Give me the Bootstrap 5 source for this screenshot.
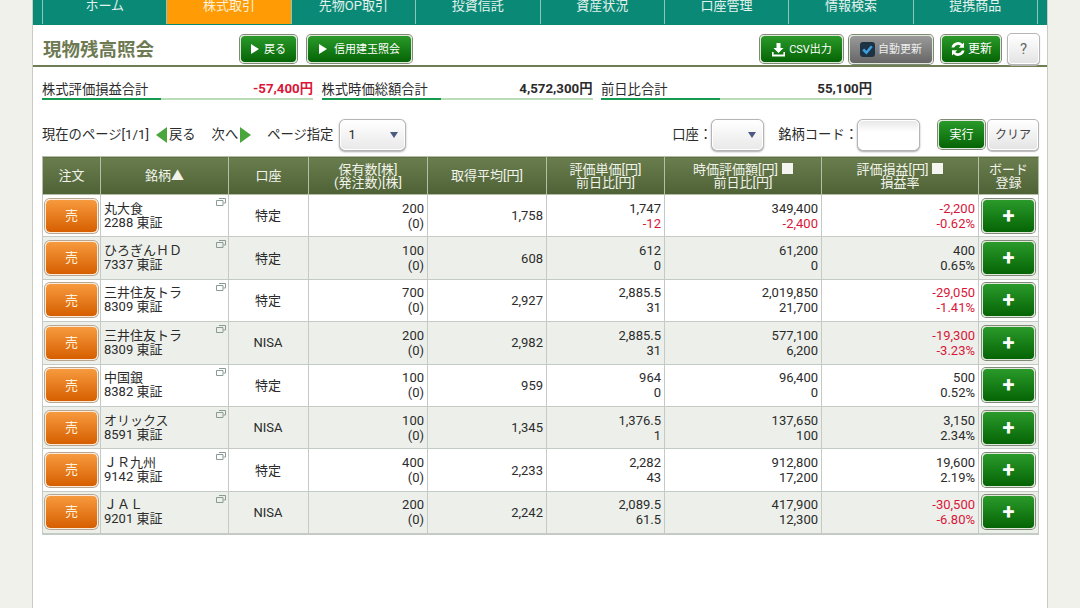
<!DOCTYPE html>
<html lang="ja">
<head>
  <meta charset="UTF-8">
  <meta name="viewport" content="width=device-width, initial-scale=1.0">
  <title>現物残高照会</title>
  <link href="https://cdn.jsdelivr.net/npm/bootstrap@5.3.0/dist/css/bootstrap.min.css" rel="stylesheet">
  <script src="https://cdn.jsdelivr.net/npm/bootstrap@5.3.0/dist/js/bootstrap.bundle.min.js"></script>
  <style>
    html, body { height: 608px; overflow: hidden; }
    body { background: #f1f1ec; font-family: "Roboto", "Noto Sans CJK JP", sans-serif; font-size: 13px; color: #2b2b2b; }
    .sheet { width: 1016px; height: 608px; margin-left: 32px; background: #fff; border-left: 1px solid #c9cbc4; border-right: 1px solid #c9cbc4; }
    .topnav { height: 25px; padding: 0 9px 0 9px; background: #0a8a76; overflow: hidden; border-bottom: 1px solid #0a8a76; }
    .topnav a { flex: 1 1 0; height: 25px; line-height: 12px; text-align: center; color: #e4f2ee; font-size: 13px; text-decoration: none; border-left: 1px solid #8cc6ba; }
    .topnav a:last-child { border-right: 1px solid #8cc6ba; }
    .topnav a.on { background: #ff9b05; color: #fff0d8; }
    .titlebar { height: 42px; padding: 8px 8px 0 10px; border-bottom: 2px solid #6f7d52; }
    .titlebar h1 { font-size: 18.5px; font-weight: 700; color: #6d7a52; margin: 3px 0 0; width: 197px; }
    .gbtn, .wbtn { display: inline-flex; align-items: center; justify-content: center; padding: 0; font-size: 11px; border-radius: 4px; line-height: 1; }
    .gbtn { color: #fff; background: linear-gradient(#2a9a2a, #056405); background-clip: padding-box; border: 1px solid #e2e7dc; box-shadow: 0 0 0 1px #7d8a75; }
    .gbtn:hover, .wbtn:hover { color: inherit; }
    .wbtn { color: #444; background: linear-gradient(#fff, #e4e4e4); border: 1px solid #fff; box-shadow: 0 0 0 1px #b5b5b5, 0 1px 1px 1px #bbb; }
    .b-back { width: 57px; height: 28px; gap: 5px; }
    .b-margin { width: 105px; height: 28px; gap: 7px; margin-left: 10px; }
    .b-csv { width: 83px; height: 28px; gap: 3px; }
    .b-auto { width: 84px; height: 29px; gap: 3px; margin-left: 6px; color: #eee; background: linear-gradient(#9a9a9a, #666); background-clip: padding-box; }
    .b-renew { width: 60px; height: 28px; gap: 2px; margin-left: 8px; font-size: 12px; }
    .b-help { width: 31px; height: 30px; margin-left: 7px; font-size: 15px; color: #666; }
    .tri { width: 0; height: 0; border-left: 8px solid #fff; border-top: 5px solid transparent; border-bottom: 5px solid transparent; }
    .autotick { width: 15px; height: 15px; border-radius: 3px; background: #1d3344; }
    .sums { padding: 13px 0 0 9px; height: 33px; gap: 8.5px; }
    .sumbox { width: 271px; height: 20px; border-bottom: 2px solid #b9dcb9; position: relative; line-height: 20px; font-size: 13.3px; }
    .sumbox::after { content: ""; position: absolute; left: 0; bottom: -2px; width: 119px; height: 2px; background: #159a4f; }
    .sumbox b { font-weight: 700; font-size: 13.3px; line-height: 18px; }
    .neg { color: #d9163a; }
    .pager { height: 33px; margin-top: 18px; padding: 0 9px 0 9px; font-size: 13.3px; }
    .tri-l, .tri-r { display: inline-block; width: 0; height: 0; border-top: 8px solid transparent; border-bottom: 8px solid transparent; }
    .tri-l { border-right: 11px solid #4aa63c; margin: 0 2px 0 7px; }
    .tri-r { border-left: 11px solid #4aa63c; margin: 0 0 0 2px; }
    .selbox { height: 30px; background: linear-gradient(#fff, #e9e9e9); border: 1px solid #fff; border-radius: 5px; box-shadow: 0 0 0 1px #b5b5b5, 0 1px 2px 1px #aaa; display: inline-flex; align-items: center; padding: 0 6px 0 7px; font-size: 13px; }
    .selbox::after { content: ""; margin-left: auto; border-top: 6px solid #4a5a80; border-left: 4px solid transparent; border-right: 4px solid transparent; }
    .s-page { width: 65px; margin-left: 7px; }
    .s-acct { width: 51px; }
    .codelabel { margin-left: 15px; }
    .codebox { width: 61px; height: 30px; background: linear-gradient(#e8e8e8, #fff 40%); border: 1px solid #fff; border-radius: 5px; box-shadow: 0 0 0 1px #b5b5b5, 0 1px 2px 1px #aaa; }
    .b-run { width: 47px; height: 29px; margin-left: 19px; font-size: 12px; }
    .b-clear { width: 50px; height: 30px; margin-left: 3px; font-size: 12px; }
    .holdings { table-layout: fixed; width: 996px; margin: 5px 0 0 9px; border-collapse: collapse; border-bottom: 2px solid #c4cbc4; }
    .holdings th { height: 38px; padding: 0; text-align: center; font-weight: 400; font-size: 13px; line-height: 13px; color: #f2f4ec; background: linear-gradient(#6a7d4e, #4f6236); border: 1px solid #b5bfa8; }
    .holdings td { height: 42.4px; padding: 0 3px 0 2px; border: 1px solid #c4cbc4; font-size: 13px; line-height: 15px; text-align: right; position: relative; background: #fff; }
    .holdings tr:nth-child(even) td { background: #edf0ea; }
    .holdings td.ctr { text-align: center; }
    .holdings td.name { text-align: left; line-height: 14px; padding-left: 3px; }
    .holdings td.btncell { padding: 0; text-align: center; }
    .c1 { width: 58px; } .c2 { width: 128px; } .c3 { width: 80px; } .c4 { width: 119px; } .c5 { width: 119px; }
    .c6 { width: 118px; } .c7 { width: 157px; } .c8 { width: 157px; } .c9 { width: 60px; }
    .sell { width: 53px; height: 34px; color: #fff3dd; font-size: 13px; background: linear-gradient(#f79a3e, #d65f00); background-clip: padding-box; border: 1px solid #fbeadb; border-radius: 5px; box-shadow: 0 0 0 1px #b9a68f; display: inline-flex; align-items: center; justify-content: center; padding: 0; }
    .plus { width: 53px; height: 34px; font-size: 22px; font-weight: 700; }
    .winicon { position: absolute; top: 3px; right: 2px; }
    .hbox { display: inline-block; width: 11px; height: 11px; background: #f4f4f0; margin-left: 4px; vertical-align: 0; }
  </style>
</head>
<body>
  <div class="sheet">
    <!-- 上部メニュー -->
    <nav class="topnav d-flex">
      <a href="#">ホーム</a>
      <a href="#" class="on">株式取引</a>
      <a href="#">先物OP取引</a>
      <a href="#">投資信託</a>
      <a href="#">資産状況</a>
      <a href="#">口座管理</a>
      <a href="#">情報検索</a>
      <a href="#">提携商品</a>
    </nav>

    <div class="titlebar d-flex align-items-center">
      <h1>現物残高照会</h1>
      <button class="btn gbtn b-back"><span class="tri"></span>戻る</button>
      <button class="btn gbtn b-margin"><span class="tri"></span>信用建玉照会</button>
      <div class="ms-auto d-flex align-items-center">
        <button class="btn gbtn b-csv">
          <svg width="15" height="15" viewBox="0 0 15 15"><path d="M5.500 1h4v5h3l-5 5-5-5h3z M1 10h1.600v2.600h9.800V10H14v4.400H1z" fill="#fff"/></svg>CSV出力
        </button>
        <button class="btn gbtn b-auto">
          <svg class="autotick" viewBox="0 0 14 14"><path d="M3 7l3 3 5-6" fill="none" stroke="#3aa0e0" stroke-width="2.400"/></svg>自動更新
        </button>
        <button class="btn gbtn b-renew">
          <svg width="16" height="16" viewBox="0 0 16 16"><path d="M14 1.500v5.200H8.800l1.900-1.900A4 4 0 0 0 4.200 6.500H1.500A6.500 6.500 0 0 1 12.500 3z M2 14.500V9.300h5.200l-1.900 1.900a4 4 0 0 0 6.500-1.700h2.700A6.500 6.500 0 0 1 3.500 13z" fill="#fff"/></svg>更新
        </button>
        <button class="btn wbtn b-help">?</button>
      </div>
    </div>

    <div class="sums d-flex">
      <div class="sumbox d-flex justify-content-between"><span>株式評価損益合計</span><b class="neg">-57,400円</b></div>
      <div class="sumbox d-flex justify-content-between"><span>株式時価総額合計</span><b>4,572,300円</b></div>
      <div class="sumbox d-flex justify-content-between"><span>前日比合計</span><b>55,100円</b></div>
    </div>

    <div class="pager d-flex align-items-center">
      <span>現在のページ[1/1]</span><span class="tri-l"></span><span>戻る</span>
      <span class="ms-3">次へ</span><span class="tri-r"></span>
      <span class="ms-3">ページ指定</span><span class="selbox s-page">1</span>
      <div class="ms-auto d-flex align-items-center">
        <span>口座：</span><span class="selbox s-acct"></span>
        <span class="codelabel">銘柄コード：</span><span class="codebox"></span>
        <button class="btn gbtn b-run">実行</button>
        <button class="btn wbtn b-clear">クリア</button>
      </div>
    </div>

    <table class="holdings" id="holdings">
      <colgroup>
        <col class="c1"><col class="c2"><col class="c3"><col class="c4"><col class="c5"><col class="c6"><col class="c7"><col class="c8"><col class="c9">
      </colgroup>
      <thead>
        <tr>
          <th>注文</th>
          <th>銘柄▲</th>
          <th>口座</th>
          <th>保有数[株]<br>(発注数)[株]</th>
          <th>取得平均[円]</th>
          <th>評価単価[円]<br>前日比[円]</th>
          <th>時価評価額[円]<span class="hbox"></span><br>前日比[円]</th>
          <th>評価損益[円]<span class="hbox"></span><br>損益率</th>
          <th>ボード<br>登録</th>
        </tr>
      </thead>
      <tbody></tbody>
    </table>
  </div>

  <script>
    const rows = [
      ['丸大食', '2288', '特定', '200', '1,758', '1,747', '-12', '349,400', '-2,400', '-2,200', '-0.62%'],
      ['ひろぎんＨＤ', '7337', '特定', '100', '608', '612', '0', '61,200', '0', '400', '0.65%'],
      ['三井住友トラ', '8309', '特定', '700', '2,927', '2,885.5', '31', '2,019,850', '21,700', '-29,050', '-1.41%'],
      ['三井住友トラ', '8309', 'NISA', '200', '2,982', '2,885.5', '31', '577,100', '6,200', '-19,300', '-3.23%'],
      ['中国銀', '8382', '特定', '100', '959', '964', '0', '96,400', '0', '500', '0.52%'],
      ['オリックス', '8591', 'NISA', '100', '1,345', '1,376.5', '1', '137,650', '100', '3,150', '2.34%'],
      ['ＪＲ九州', '9142', '特定', '400', '2,233', '2,282', '43', '912,800', '17,200', '19,600', '2.19%'],
      ['ＪＡＬ', '9201', 'NISA', '200', '2,242', '2,089.5', '61.5', '417,900', '12,300', '-30,500', '-6.80%']
    ];
    const icon = '<svg class="winicon" width="10" height="8" viewBox="0 0 10 8"><path d="M3 .5h6.500v4.500H7.500M.5 2.500h6.500v5H.5z" fill="none" stroke="#8a9a94"/></svg>';
    const val = v => v.startsWith('-') ? '<span class="neg">' + v + '</span>' : v;
    document.querySelector('#holdings tbody').innerHTML = rows.map(r => `
      <tr>
        <td class="btncell"><button class="btn sell">売</button></td>
        <td class="name">${icon}${r[0]}<br>${r[1]} 東証</td>
        <td class="ctr">${r[2]}</td>
        <td>${r[3]}<br>(0)</td>
        <td>${r[4]}</td>
        <td>${r[5]}<br>${val(r[6])}</td>
        <td>${r[7]}<br>${val(r[8])}</td>
        <td>${val(r[9])}<br>${val(r[10])}</td>
        <td class="btncell"><button class="btn gbtn plus">+</button></td>
      </tr>`).join('');
  </script>
</body>
</html>
